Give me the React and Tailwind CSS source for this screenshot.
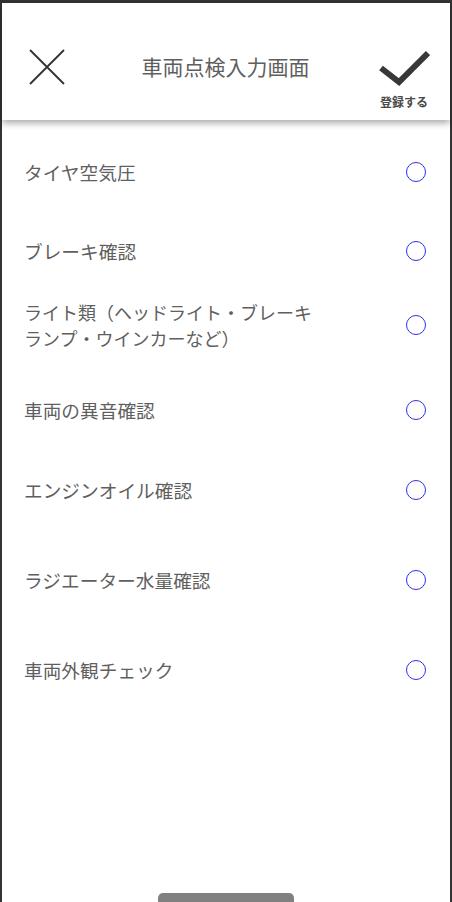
import React, { useState } from 'react';

const items = [
  { id: 1, label: 'タイヤ空気圧', mt: 'mt-[32px]' },
  { id: 2, label: 'ブレーキ確認', mt: 'mt-[39px]' },
  { id: 3, label: ['ライト類（ヘッドライト・ブレーキ', 'ランプ・ウインカーなど）'], mt: 'mt-[28px]' },
  { id: 4, label: '車両の異音確認', mt: 'mt-[39px]' },
  { id: 5, label: 'エンジンオイル確認', mt: 'mt-[40px]' },
  { id: 6, label: 'ラジエーター水量確認', mt: 'mt-[50px]' },
  { id: 7, label: '車両外観チェック', mt: 'mt-[50px]' },
];

const font = { fontFamily: '"Noto Sans CJK JP", "Noto Sans", sans-serif' };

const App = () => {
  const [checked, setChecked] = useState({});

  const toggle = (id) => setChecked(prev => ({ ...prev, [id]: !prev[id] }));

  return (
    <div className="w-full h-[902px] bg-[#333333] pt-[3px] px-[2px] overflow-hidden" style={font}>
      <div className="relative h-full bg-white flex flex-col">
        {/* Header */}
        <div className="relative z-10 h-[117px] flex items-start pl-[27px] pr-[20px] pt-[46px] bg-white shadow-[0_3px_7px_rgba(0,0,0,0.35)]">
          <button className="w-[36px] h-[36px] shrink-0">
            <svg width="36" height="36" viewBox="0 0 36 36">
              <path d="M1 1 L35 35 M35 1 L1 35" stroke="#333" strokeWidth="1.8" fill="none" />
            </svg>
          </button>
          <h1 className="flex-1 text-center pl-[8px] pt-[2px] text-[21px] leading-[30px] text-[#5f5f5f]">
            車両点検入力画面
          </h1>
          <button className="flex flex-col items-center w-[52px] shrink-0">
            <svg width="52" height="40" viewBox="0 0 52 40">
              <path d="M3 19 L21 33 L50 4" stroke="#383838" strokeWidth="6" fill="none" />
            </svg>
            <span className="mt-[6px] text-[12px] leading-[14px] font-semibold text-[#4a4a4a]">登録する</span>
          </button>
        </div>

        {/* Items */}
        <div className="flex flex-col">
          {items.map(item => (
            <div
              key={item.id}
              onClick={() => toggle(item.id)}
              className={`${item.mt} ${
                Array.isArray(item.label) ? 'h-[52px]' : 'h-[40px]'
              } flex items-center justify-between pl-[22px] pr-[24px] cursor-pointer`}
            >
              {Array.isArray(item.label) ? (
                <span className="text-[18px] leading-[26px] text-[#5f5f5f]">
                  {item.label[0]}
                  <br />
                  {item.label[1]}
                </span>
              ) : (
                <span className="text-[18.7px] leading-[26px] text-[#5f5f5f]">{item.label}</span>
              )}
              <span
                className={`w-[20px] h-[20px] rounded-full border-[1.6px] border-[#2e2ef5] ${
                  checked[item.id] ? 'bg-[#2e2ef5]' : 'bg-white'
                }`}
              />
            </div>
          ))}
        </div>

        <div className="flex-1" />

        {/* Bottom handle */}
        <div className="mx-auto w-[136px] h-[9px] rounded-t-[5px] bg-[#808080]" />
      </div>
    </div>
  );
};

export default App;
